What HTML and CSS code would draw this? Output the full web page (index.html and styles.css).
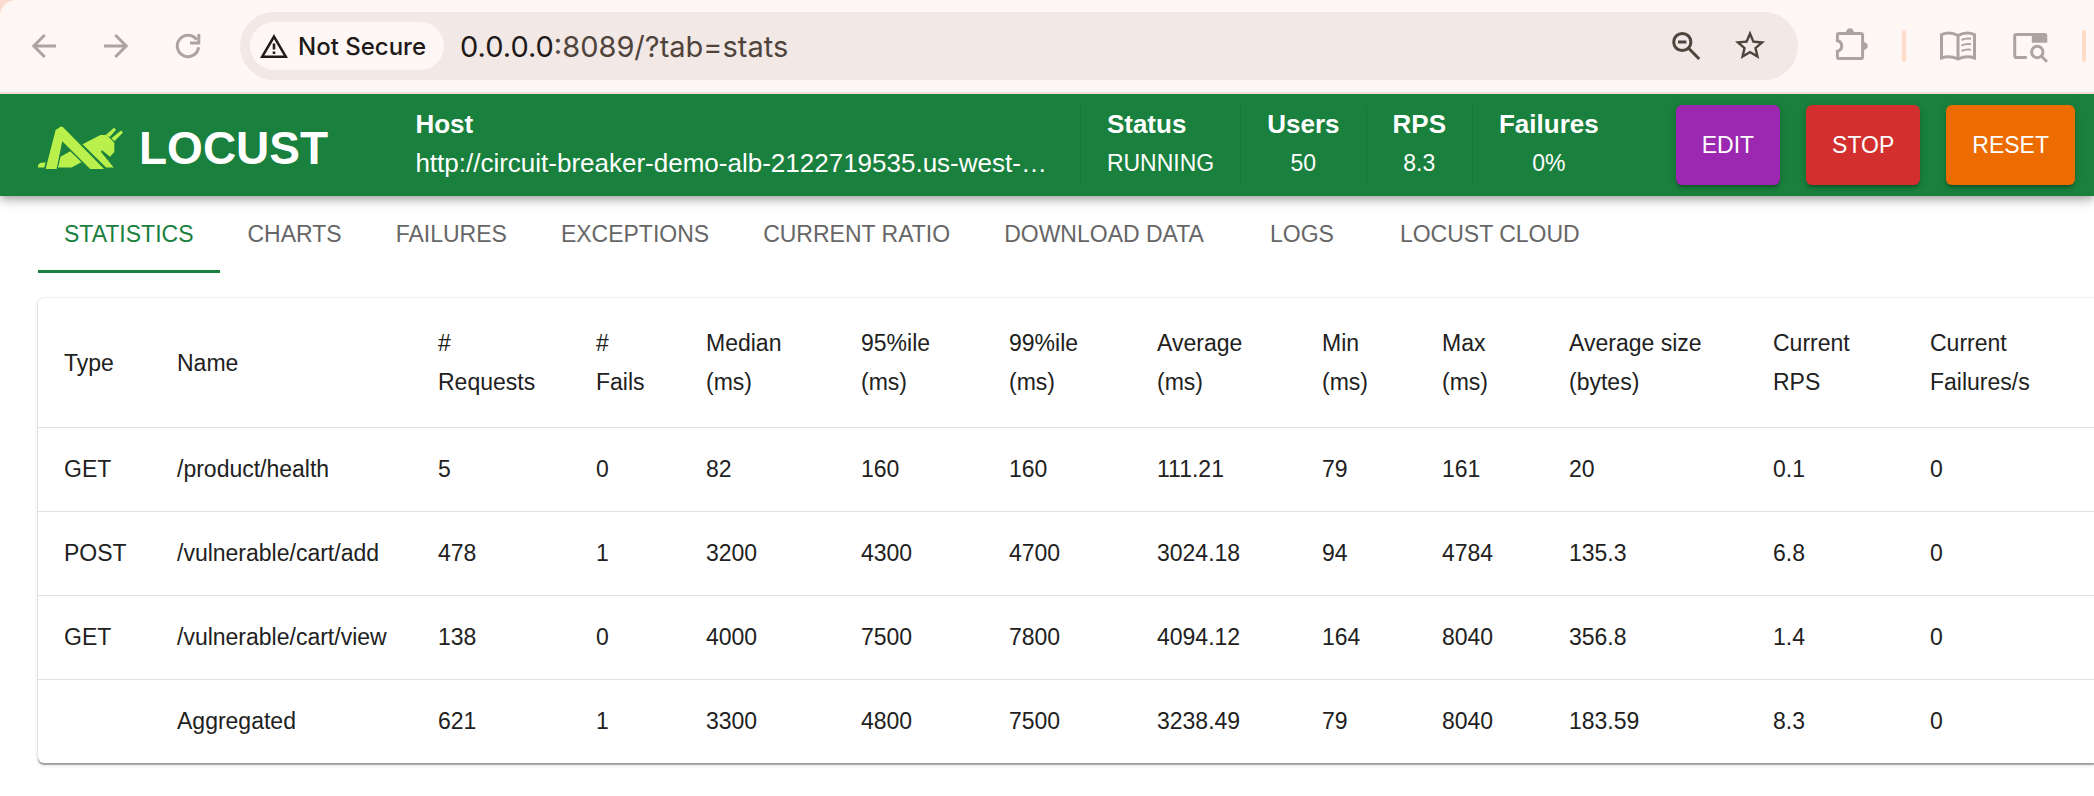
FILE: index.html
```
<!DOCTYPE html>
<html lang="en">
<head>
<meta charset="utf-8">
<title>Locust</title>
<link rel="stylesheet" href="styles.css">
</head>
<body>
<div class="browser-frame">
  <div class="browser-bar">
    <button class="bar-button" aria-label="Back"><svg class="line-icon" viewBox="0 0 40 40"><path d="M32 20H10M20.8 9L9.800 20l11 11"/></svg></button>
    <button class="bar-button" aria-label="Forward"><svg class="line-icon" viewBox="0 0 40 40"><path d="M8 20h22M19.200 9l11 11-11 11"/></svg></button>
    <button class="bar-button" aria-label="Reload"><svg class="line-icon" viewBox="0 0 40 40"><path d="M30.600 21.200A10.700 10.700 0 1 1 28.600 13.600M30.800 8v9H22"/></svg></button>
    <div class="omnibox">
      <button class="site-chip">
        <svg class="warning-icon" viewBox="0 0 28 24"><path d="M14 2.600L25.800 22.700H2.200Z"/><path d="M14 9.500v6M14 17.500v2.400"/></svg>
        Not Secure
      </button>
      <div class="address"><span class="address-host">0.0.0.0</span>:8089/?tab=stats</div>
      <button class="bar-button dark" aria-label="Zoom"><svg class="line-icon" viewBox="0 0 40 40"><circle cx="16.300" cy="16" r="8.600"/><path d="M22.600 22.300L33.200 33M12 16h8.400"/></svg></button>
      <button class="bar-button dark" aria-label="Bookmark this tab"><svg class="fill-icon" viewBox="0 0 40 40"><path transform="translate(2 1.600) scale(1.500)" d="M22 9.24l-7.19-.62L12 2 9.19 8.63 2 9.24l5.46 4.73L5.82 21 12 17.27 18.18 21l-1.63-7.03L22 9.24zM12 15.4l-3.76 2.27 1-4.28-3.32-2.88 4.38-.38L12 6.1l1.71 4.04 4.38.38-3.32 2.88 1 4.28L12 15.4z"/></svg></button>
    </div>
    <button class="bar-button" aria-label="Extensions"><svg class="line-icon" viewBox="0 0 40 40"><path d="M7.400 14.800V9a1.600 1.600 0 0 1 1.600-1.600h22A1.600 1.600 0 0 1 32.600 9v22a1.600 1.600 0 0 1-1.600 1.600H9A1.600 1.600 0 0 1 7.400 31v-5.800a5.300 5.300 0 0 0 0-10.400Z"/><path class="solid" d="M16 7a4 4.800 0 0 1 8 0ZM33 16a4.800 4 0 0 1 0 8Z"/></svg></button>
    <span class="bar-divider"></span>
    <button class="bar-button" aria-label="Reading mode"><svg class="line-icon" viewBox="0 0 40 40"><path d="M20 9.500Q11.500 5 3.500 8.600V32q8-2.800 16.500 1Q28.500 29.200 36.500 32V8.600Q28.500 5 20 9.500V33"/><path class="thin" d="M23.500 14q4.500-2.200 9.500-1.300M23.500 19.500q4.500-2.200 9.500-1.300M23.500 25q4.500-2.200 9.500-1.300"/></svg></button>
    <button class="bar-button" aria-label="Search this page"><svg class="line-icon" viewBox="0 0 40 40"><path d="M16.800 31.600H6.500a1.800 1.800 0 0 1-1.800-1.800V10.200a1.800 1.800 0 0 1 1.800-1.800H34"/><path class="solid" d="M21.800 7h13a2.500 2.500 0 0 1 2.500 2.500v7.300H21.800Z"/><circle cx="27.300" cy="26" r="5.700"/><path d="M31.400 30.200l5.600 5.600"/></svg></button>
    <span class="bar-divider"></span>
  </div>
</div>

<header class="app-bar">
  <a class="brand" href="#">
    <svg class="brand-mark" viewBox="113 100 256 132"><path d="M136 229L166 112L182 101L188 103L312 229H270L186 146L169 229Z"/><path d="M173 225L181 192L210 176L244 209L214 225Z"/><path d="M113 225V218L119 211L136 209L132 225Z"/><path d="M247 155L301 127H320L343 150V177L330 192L305 172L303 178L341 225H318Z"/><path d="M317 127L342 105L348 111L329 133ZM334 137L363 113L369 119L343 146Z"/></svg>
    LOCUST
  </a>
  <dl class="stats">
    <div class="stat host"><dt>Host</dt><dd>http://circuit-breaker-demo-alb-2122719535.us-west-…</dd></div>
    <div class="stat"><dt>Status</dt><dd>RUNNING</dd></div>
    <div class="stat"><dt>Users</dt><dd>50</dd></div>
    <div class="stat"><dt>RPS</dt><dd>8.3</dd></div>
    <div class="stat"><dt>Failures</dt><dd>0%</dd></div>
  </dl>
  <div class="actions">
    <button class="action edit">EDIT</button>
    <button class="action stop">STOP</button>
    <button class="action reset">RESET</button>
  </div>
</header>

<main class="content">
  <nav class="tabs" role="tablist">
    <button class="tab active" role="tab" aria-selected="true">STATISTICS</button>
    <button class="tab" role="tab">CHARTS</button>
    <button class="tab" role="tab">FAILURES</button>
    <button class="tab" role="tab">EXCEPTIONS</button>
    <button class="tab" role="tab">CURRENT RATIO</button>
    <button class="tab" role="tab">DOWNLOAD DATA</button>
    <button class="tab" role="tab">LOGS</button>
    <button class="tab" role="tab">LOCUST CLOUD</button>
  </nav>
  <div class="card">
    <table class="stats-table">
      <colgroup><col class="c-type"><col class="c-name"><col class="c-requests"><col class="c-fails"><col class="c-median"><col class="c-pct"><col class="c-pct"><col class="c-average"><col class="c-min"><col class="c-max"><col class="c-size"><col class="c-rps"><col class="c-failrate"></colgroup>
      <thead>
        <tr><th>Type</th><th>Name</th><th>#<br>Requests</th><th>#<br>Fails</th><th>Median<br>(ms)</th><th>95%ile<br>(ms)</th><th>99%ile<br>(ms)</th><th>Average<br>(ms)</th><th>Min<br>(ms)</th><th>Max<br>(ms)</th><th>Average size<br>(bytes)</th><th>Current<br>RPS</th><th>Current<br>Failures/s</th></tr>
      </thead>
      <tbody>
        <tr><td>GET</td><td>/product/health</td><td>5</td><td>0</td><td>82</td><td>160</td><td>160</td><td>111.21</td><td>79</td><td>161</td><td>20</td><td>0.1</td><td>0</td></tr>
        <tr><td>POST</td><td>/vulnerable/cart/add</td><td>478</td><td>1</td><td>3200</td><td>4300</td><td>4700</td><td>3024.18</td><td>94</td><td>4784</td><td>135.3</td><td>6.8</td><td>0</td></tr>
        <tr><td>GET</td><td>/vulnerable/cart/view</td><td>138</td><td>0</td><td>4000</td><td>7500</td><td>7800</td><td>4094.12</td><td>164</td><td>8040</td><td>356.8</td><td>1.4</td><td>0</td></tr>
        <tr><td></td><td>Aggregated</td><td>621</td><td>1</td><td>3300</td><td>4800</td><td>7500</td><td>3238.49</td><td>79</td><td>8040</td><td>183.59</td><td>8.3</td><td>0</td></tr>
      </tbody>
    </table>
  </div>
</main>
</body>
</html>
```
FILE: styles.css
```
* { box-sizing: border-box; }
body {
  margin: 0;
  background: #fff;
  color: #212121;
  font-family: "Liberation Sans", Arial, sans-serif;
  font-size: 23px;
}
button {
  margin: 0;
  padding: 0;
  border: 0;
  background: none;
  color: inherit;
  font: inherit;
  cursor: pointer;
}

/* Browser bar */
.browser-frame { background: #f9dccf; }
.browser-bar {
  display: flex;
  align-items: center;
  gap: 32px;
  padding: 12px 8px 12px 24px;
  background: #fff7f5;
  border-bottom: 2px solid #f9dfd5;
  border-top-left-radius: 16px;
}
.bar-button {
  flex: none;
  width: 40px;
  height: 40px;
  color: #aea3a1;
}
.bar-button.dark { color: #4f443b; }
.bar-button svg { display: block; width: 40px; height: 40px; }
.line-icon { fill: none; stroke: currentColor; stroke-width: 3; }
.line-icon .solid { fill: currentColor; stroke: none; }
.line-icon .thin { stroke-width: 2; }
.fill-icon { fill: currentColor; }
.omnibox {
  flex: 1;
  display: flex;
  align-items: center;
  gap: 24px;
  height: 68px;
  padding: 0 28px 0 10px;
  border-radius: 34px;
  background: #f2e8e6;
}
.site-chip {
  display: flex;
  align-items: center;
  gap: 10px;
  height: 48px;
  padding: 0 18px 0 10px;
  border-radius: 24px;
  background: #fff7f5;
  color: #201a18;
  font: 500 24px Inter, sans-serif;
  white-space: nowrap;
}
.warning-icon { width: 28px; height: 24px; fill: none; stroke: currentColor; stroke-width: 2.6; }
.address {
  flex: 1;
  margin-left: -8px;
  color: #4f443b;
  font: 29px Inter, sans-serif;
}
.address-host { color: #201a18; }
.bar-divider {
  flex: none;
  width: 4px;
  height: 32px;
  border-radius: 2px;
  background: #ffdcc8;
}

/* App bar */
.app-bar {
  position: relative;
  display: flex;
  align-items: center;
  padding: 11px 19px 11px 38px;
  background: #19803d;
  color: #fff;
  box-shadow: 0 3px 6px -2px rgba(0, 0, 0, .2), 0 6px 8px rgba(0, 0, 0, .14), 0 2px 16px rgba(0, 0, 0, .12);
}
.browser-frame { position: relative; z-index: 1; }
.brand {
  display: flex;
  align-items: center;
  gap: 16px;
  padding-top: 6px;
  color: #fff;
  font-size: 46px;
  font-weight: bold;
  line-height: 48px;
  text-decoration: none;
}
.brand-mark { width: 85px; height: 44px; fill: #b9f04b; }
.stats {
  display: flex;
  margin: 0 51px 0 auto;
}
.stat {
  height: 80px;
  padding: 0 26px;
  text-align: center;
  white-space: nowrap;
}
.stat + .stat { border-left: 1px solid #177539; }
.stat dt { font-size: 26px; font-weight: bold; line-height: 38px; }
.stat dd { margin: 0; line-height: 40px; }
.stat:nth-child(-n+2) { text-align: left; }
.stat.host { padding-right: 33px; }
.stat.host dd { font-size: 26px; }
.actions { display: flex; gap: 26px; }
.action {
  height: 80px;
  padding: 0 26px;
  border-radius: 6px;
  color: #fff;
  box-shadow: 0 4px 2px -3px rgba(0, 0, 0, .2), 0 3px 3px rgba(0, 0, 0, .14), 0 2px 8px rgba(0, 0, 0, .12);
}
.edit { background: #9c27b0; }
.stop { background: #d32f2f; }
.reset { background: #ed6c02; }

/* Tabs and table */
.content { padding: 0 0 26px 38px; }
.tabs { display: flex; gap: 2px; }
.tab {
  min-width: 140px;
  height: 77px;
  padding: 3px 26px 0;
  border-bottom: 3px solid transparent;
  color: #666;
  white-space: nowrap;
}
.tab.active { border-bottom-color: #19803d; color: #19803d; }
.card {
  margin-top: 25px;
  border-radius: 6px 0 0 6px;
  background: #fff;
  box-shadow: 0 2px 1px rgba(0, 0, 0, .3), 0 0 2px rgba(0, 0, 0, .14), 0 2px 5px rgba(0, 0, 0, .12);
}
.stats-table {
  width: 100%;
  table-layout: fixed;
  border-collapse: separate;
  border-spacing: 0;
}
.stats-table th,
.stats-table td {
  padding: 25px 0 26px 26px;
  border-bottom: 1px solid #e0e0e0;
  font-weight: normal;
  line-height: 32px;
  text-align: left;
  white-space: nowrap;
}
.stats-table th { padding: 26px 0 25px 26px; line-height: 39px; }
.stats-table tbody tr:last-child td { border-bottom: 0; }
.c-type { width: 113px; }
.c-name { width: 261px; }
.c-requests { width: 158px; }
.c-fails { width: 110px; }
.c-median { width: 155px; }
.c-pct { width: 148px; }
.c-average { width: 165px; }
.c-min { width: 120px; }
.c-max { width: 127px; }
.c-size { width: 204px; }
.c-rps { width: 157px; }
.c-failrate { width: 190px; }
```
